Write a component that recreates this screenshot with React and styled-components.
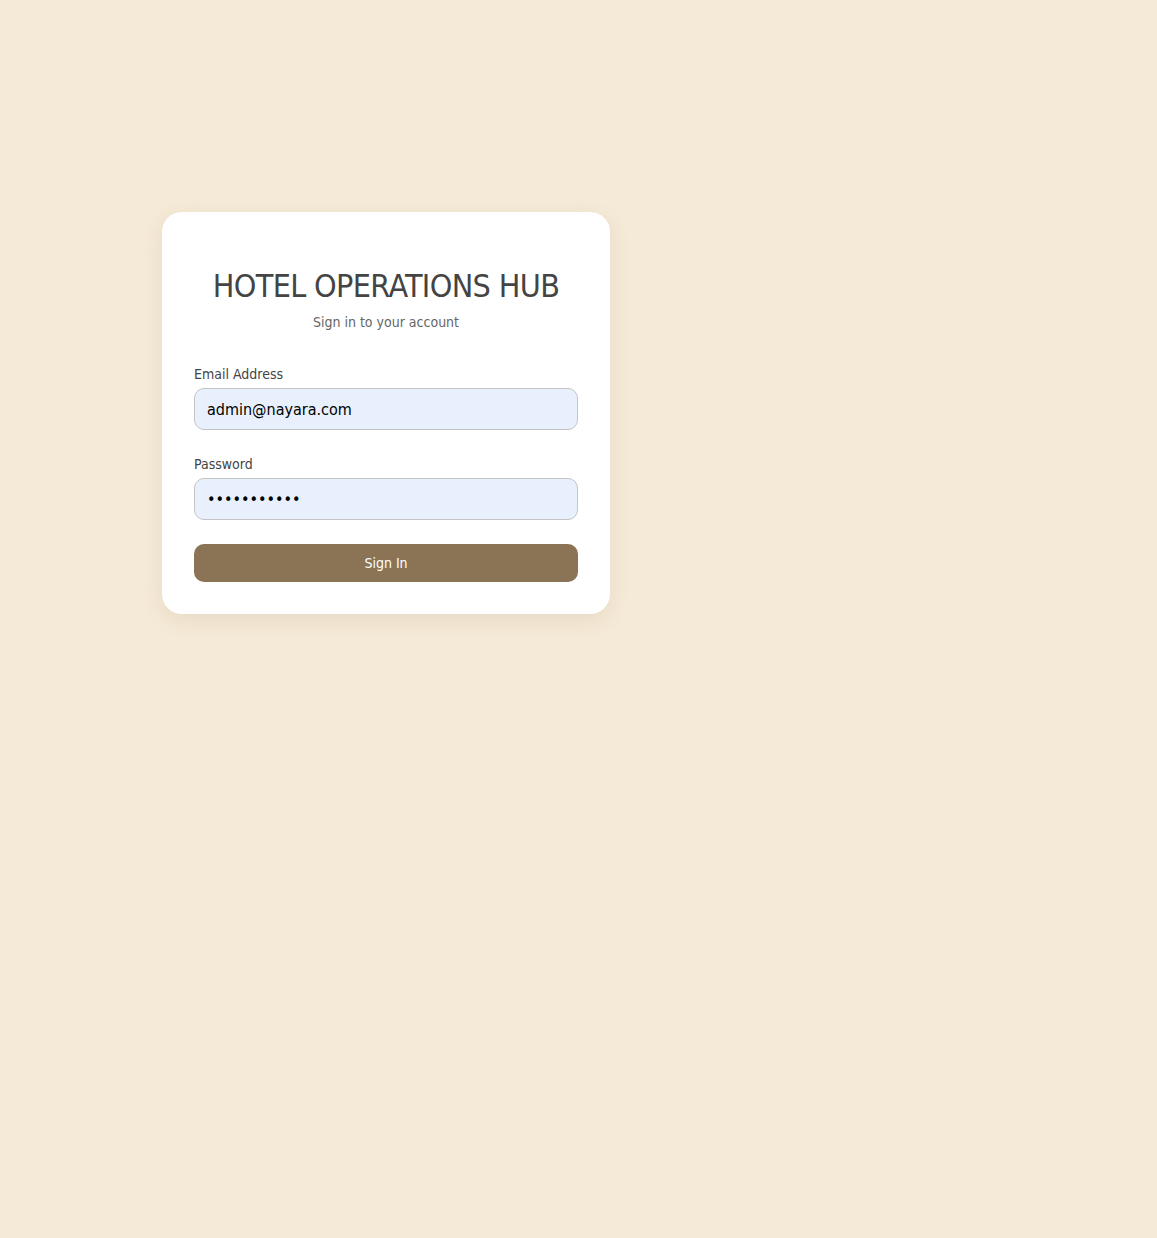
import React from 'react';
import styled, { createGlobalStyle } from 'styled-components';

const GlobalStyle = createGlobalStyle`
  * { box-sizing: border-box; }
  body {
    margin: 0;
    background: #f5ead7;
    font-family: "DejaVu Sans Condensed", "DejaVu Sans", sans-serif;
  }
`;

const Page = styled.div`
  min-height: 100vh;
  padding: 212px 0 0 162px;
`;

const Card = styled.form`
  width: 448px;
  background: #ffffff;
  border-radius: 20px;
  padding: 48px 32px 32px;
  box-shadow: 0 6px 20px rgba(139, 115, 85, 0.12);
`;

const Title = styled.h1`
  margin: 0;
  text-align: center;
  font-size: 32px;
  font-weight: normal;
  color: #444444;
  line-height: 52px;
  letter-spacing: -0.65px;
`;

const Subtitle = styled.p`
  margin: 0 0 34px;
  text-align: center;
  font-size: 14px;
  color: #666666;
  line-height: 20px;
`;

const Field = styled.div`
  display: flex;
  flex-direction: column;
  gap: 5px;
  margin-bottom: 26px;

  &:last-of-type {
    margin-bottom: 24px;
  }
`;

const Label = styled.label`
  font-size: 14px;
  color: #444444;
  line-height: 17px;
`;

const Input = styled.input`
  height: 42px;
  width: 100%;
  padding: 0 12px;
  border: 1px solid #c4c4c4;
  border-radius: 10px;
  background: #e8f0fe;
  font-family: inherit;
  font-size: 16px;
  color: #000000;
  outline: none;
`;

const Button = styled.button`
  display: block;
  width: 100%;
  height: 38px;
  border: none;
  border-radius: 10px;
  background: #8b7355;
  color: #ffffff;
  font-family: inherit;
  font-size: 14px;
  cursor: pointer;
`;

export default function App() {
  return (
    <>
      <GlobalStyle />
      <Page>
        <Card onSubmit={(e) => e.preventDefault()}>
          <Title>HOTEL OPERATIONS HUB</Title>
          <Subtitle>Sign in to your account</Subtitle>
          <Field>
            <Label htmlFor="email">Email Address</Label>
            <Input id="email" type="email" defaultValue="admin@nayara.com" />
          </Field>
          <Field>
            <Label htmlFor="password">Password</Label>
            <Input id="password" type="password" defaultValue="password123" />
          </Field>
          <Button type="submit">Sign In</Button>
        </Card>
      </Page>
    </>
  );
}
